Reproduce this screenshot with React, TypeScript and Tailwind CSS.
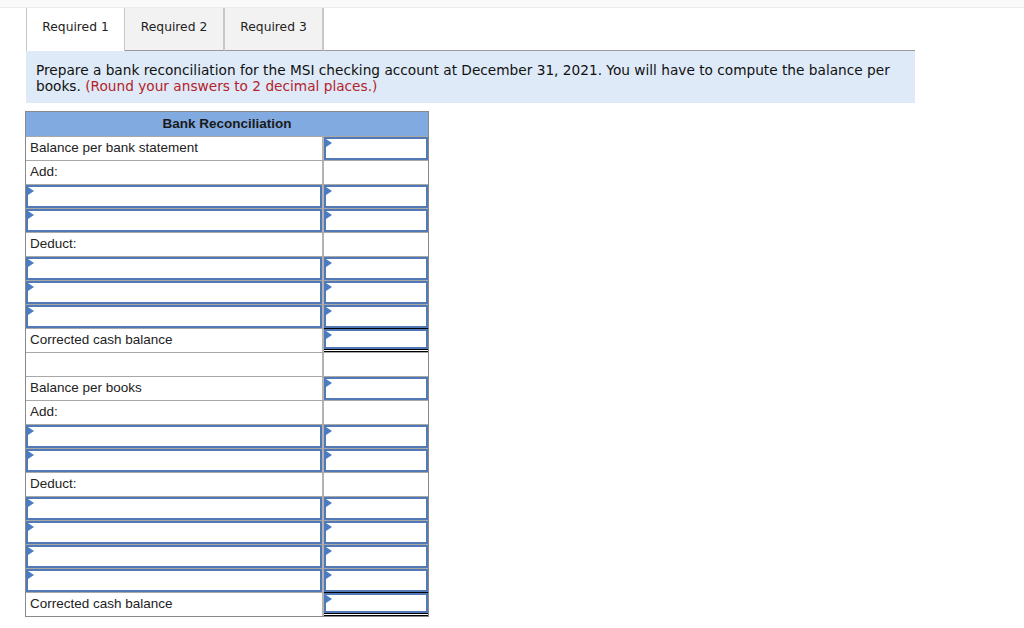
type Row =
  | { kind: 'label'; text: string; amount?: 'input' | 'total' }
  | { kind: 'input' }
  | { kind: 'blank' }

const rows: Row[] = [
  { kind: 'label', text: 'Balance per bank statement', amount: 'input' },
  { kind: 'label', text: 'Add:' },
  { kind: 'input' },
  { kind: 'input' },
  { kind: 'label', text: 'Deduct:' },
  { kind: 'input' },
  { kind: 'input' },
  { kind: 'input' },
  { kind: 'label', text: 'Corrected cash balance', amount: 'total' },
  { kind: 'blank' },
  { kind: 'label', text: 'Balance per books', amount: 'input' },
  { kind: 'label', text: 'Add:' },
  { kind: 'input' },
  { kind: 'input' },
  { kind: 'label', text: 'Deduct:' },
  { kind: 'input' },
  { kind: 'input' },
  { kind: 'input' },
  { kind: 'input' },
  { kind: 'label', text: 'Corrected cash balance', amount: 'total' },
]

function InputBox() {
  return (
    <div className="relative h-full w-full border-2 border-[#5079b6] bg-white">
      <span className="absolute left-0 top-0 h-0 w-0 border-y-[4px] border-l-[6px] border-y-transparent border-l-[#4a7bc4]" />
    </div>
  )
}

function TableRow({ row }: { row: Row }) {
  if (row.kind === 'input') {
    return (
      <div className="flex h-[24px] border-t border-[#a8a8a8]">
        <div className="w-[298px] border-r-2 border-[#b3b3b3]">
          <InputBox />
        </div>
        <div className="flex-1">
          <InputBox />
        </div>
      </div>
    )
  }
  if (row.kind === 'blank') {
    return (
      <div className="flex h-[24px] border-t border-[#a8a8a8]">
        <div className="w-[298px] border-r-2 border-[#b3b3b3]" />
        <div className="flex-1" />
      </div>
    )
  }
  return (
    <div className="flex h-[24px] border-t border-[#a8a8a8]">
      <div className="flex w-[298px] items-center border-r-2 border-[#b3b3b3] pl-[4px] text-[13.5px] text-[#222]">
        {row.text}
      </div>
      <div
        className={
          row.amount === 'total'
            ? '-mt-px flex-1 border-t border-b-[3px] border-double border-black'
            : 'flex-1'
        }
      >
        {row.amount ? <InputBox /> : null}
      </div>
    </div>
  )
}

export default function App() {
  return (
    <div className="min-h-[628px] w-[1024px] bg-white" style={{ fontFamily: '"Liberation Sans", Arial, sans-serif' }}>
      <div className="h-[8px] border-b border-[#ececec] bg-[#fafafa]" />
      <div className="ml-[26px] flex h-[43px] text-[12.3px] text-[#222]" style={{ fontFamily: '"DejaVu Sans", Verdana, sans-serif' }}>
        <div className="flex w-[99px] items-center justify-center border-l border-r border-[#c8c8c8] bg-white pb-[5px]">Required 1</div>
        <div className="flex w-[100px] items-center justify-center border-b border-r-2 border-[#c8c8c8] border-b-[#9a9a9a] bg-[#f2f2f2] pb-[4px]">Required 2</div>
        <div className="flex w-[99px] items-center justify-center border-b border-r-2 border-[#c8c8c8] border-b-[#9a9a9a] bg-[#f2f2f2] pb-[4px]">Required 3</div>
        <div className="w-[591px] border-b border-[#9a9a9a]" />
      </div>
      <div
        className="ml-[26px] w-[889px] bg-[#deeaf7] px-[10px] pb-[9px] pt-[11px] text-[13.7px] leading-[16px] text-[#111]"
        style={{ fontFamily: '"DejaVu Sans", Verdana, sans-serif' }}
      >
        <span className="whitespace-nowrap">
          Prepare a bank reconciliation for the MSI checking account at December 31, 2021. You will have to compute the balance per
        </span>
        <br />
        books. <span className="text-[#b4232a]">(Round your answers to 2 decimal places.)</span>
      </div>
      <div className="ml-[25px] mt-[8px] w-[404px] border border-[#8a8a8a]">
        <div className="flex h-[24px] items-center justify-center bg-[#80aae0] text-[13.5px] font-bold text-[#1a1a1a]">
          Bank Reconciliation
        </div>
        {rows.map((r, i) => (
          <TableRow key={i} row={r} />
        ))}
      </div>
    </div>
  )
}
